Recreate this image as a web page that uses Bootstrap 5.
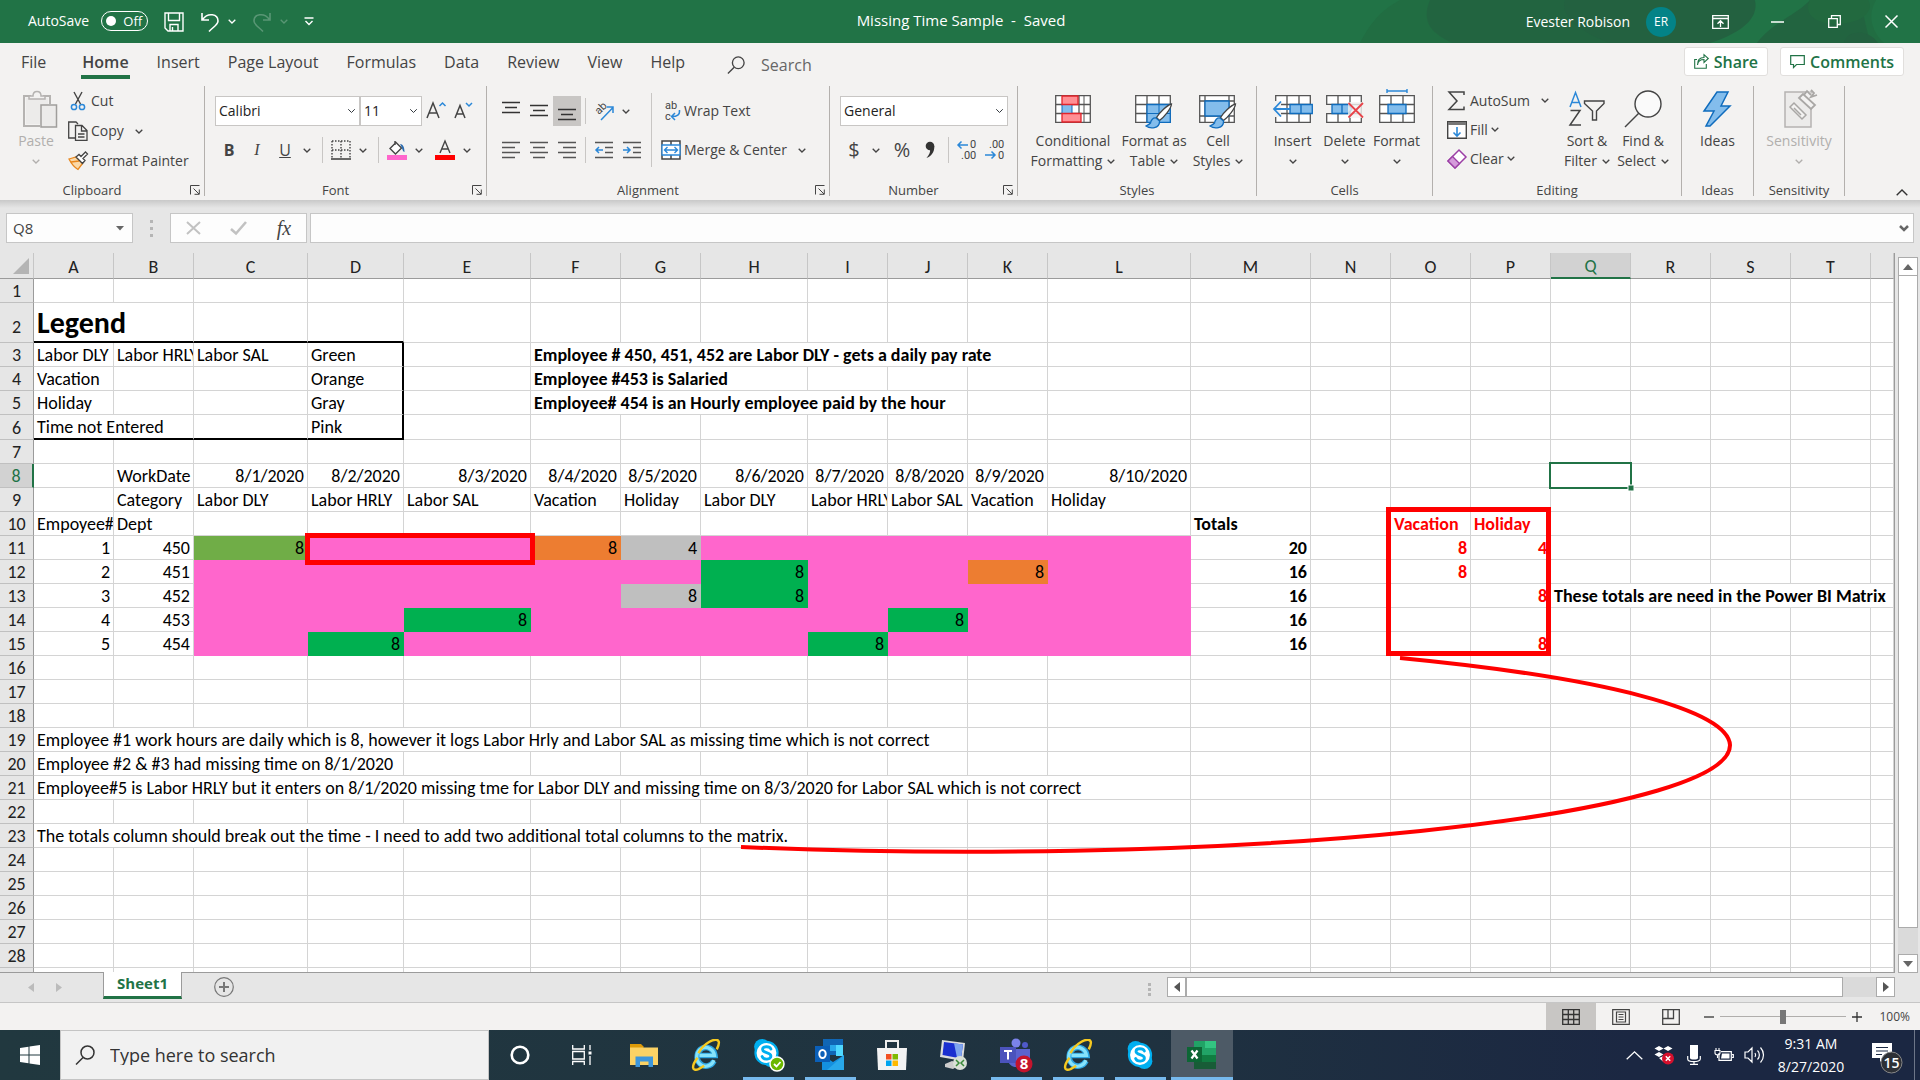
<!DOCTYPE html>
<html lang="en">
<head>
<meta charset="utf-8">
<meta name="viewport" content="width=device-width, initial-scale=1">
<title>Missing Time Sample - Excel</title>
<link rel="stylesheet" href="https://cdn.jsdelivr.net/npm/bootstrap@5.3.0/dist/css/bootstrap.min.css">
<style>
  :root { --xl: #217346; --chrome: #f3f2f1; --ink: #444; --blue: #2b88d8; --line: #d4d4d4; --edge: #9b9b9b; }
  body { font-family: "Open Sans", sans-serif; font-size: 14px; line-height: 20px; color: var(--ink); height: 100vh; overflow: hidden; background: #e6e6e6; }
  body > * { flex-shrink: 0; }
  svg { display: block; flex: none; fill: none; overflow: visible; }
  button, .btn { font-family: inherit; }
  .plain { border: 0; background: none; padding: 0; color: inherit; font-size: 14px; line-height: 20px; display: inline-flex; align-items: center; justify-content: center; }
  .serif { font-family: "Liberation Serif", serif; font-style: italic; }
  .tiny { font-family: Roboto, sans-serif; font-size: 11px; fill: #444; }

  /* title bar */
  .titlebar { height: 43px; background: var(--xl); color: #fff; position: relative; }
  .titlebar .deco { position: absolute; right: 0; top: 0; }
  .titlebar > .zone { position: relative; flex: 1 1 0; }
  .doc { font-size: 15px; padding: 0 0 4px 2px; }
  .lift { padding-bottom: 2px; }
  .autosave { width: 47px; height: 20px; border: 1px solid #fff; border-radius: 10px; background: none; appearance: none; margin: 0; display: block; }
  .autosave::before { content: ""; display: block; width: 10px; height: 10px; border-radius: 5px; background: #fff; margin: 4px 0 0 4px; }
  .autosave-text { position: absolute; right: 6px; top: 0; font-size: 13px; line-height: 20px; }
  .avatar { width: 30px; height: 30px; background: #038387; font-size: 12px; }
  .winbtn { width: 57px; height: 43px; }

  /* tab strip */
  .tabs { height: 43px; background: var(--chrome); padding-left: 7px; }
  .tabs .nav-link { font-size: 16px; line-height: 38px; padding: 0 14px; color: var(--ink); height: 36px; position: relative; }
  .tabs .nav-link.active { font-weight: 600; }
  .tabs .nav-link.active::after { content: ""; position: absolute; left: 13px; right: 13px; bottom: 0; height: 4px; background: var(--xl); }
  .tellme { border: 0; background: none; font-size: 16px; width: 160px; color: #666; padding: 0; outline: 0; }
  .tellme::placeholder, .winsearch::placeholder { color: inherit; opacity: 1; }
  .pill { background: #fff; border: 1px solid #e1dfdd; border-radius: 3px; height: 29px; color: var(--xl); font-weight: 600; font-size: 16px; padding: 0 9px; gap: 5px; }

  /* ribbon */
  .ribbon { height: 114px; background: var(--chrome); }
  .grp { height: 110px; border-right: 1px solid #b3b0ad; }
  .grp-body { height: 98px; }
  .grp-name { font-size: 13px; line-height: 12px; height: 12px; }
  .grp-name span { padding-right: 6px; }
  .grp-name button { width: 10px; margin-right: 4px; }
  .pad-10 { padding-left: 10px; }
  .row-1 { margin-top: 10px; } .row-2 { margin-top: 9px; }
  .ib { width: 28px; height: 30px; }
  .ch { width: 16px; height: 30px; }
  .rule { width: 1px; background: #c8c6c4; margin: 2px 4px; }
  .rule-l { margin-left: 7px; }
  .tall-rule { width: 1px; height: 74px; background: #c8c6c4; margin: 7px 9px 0 5px; }
  .tool { height: 30px; gap: 3px; justify-content: flex-start; white-space: nowrap; }
  .tool > svg:first-child { width: 20px; }
  .edit-tools { width: 126px; padding-left: 14px; }
  .edit-tools .tool { height: 29px; }
  .big { flex-direction: column; justify-content: flex-start; white-space: nowrap; text-align: center; }
  .big > .pic { height: 45px; display: flex; align-items: center; }
  .big > .cap { display: flex; height: 20px; align-items: center; gap: 5px; }
  .w52 { width: 52px; } .w56 { width: 56px; } .w60 { width: 60px; } .w68 { width: 68px; } .w94 { width: 94px; }
  .faded { color: #b1afad; }
  .combo { border: 1px solid #c8c6c4; border-radius: 0; height: 30px; font-size: 14px; line-height: 20px; padding: 0 20px 0 3px; background-color: #fff; background-position: right 3px center; background-size: 9px 8px; color: #222; }
  .combo-font { width: 145px; } .combo-size { width: 62px; } .combo-num { width: 168px; }
  .pressed { background: #c8c6c4; }

  /* formula bar */
  .fbar { background: linear-gradient(#c9c9c9, #e6e6e6 8px); padding: 13px 6px 10px; }
  .box { height: 30px; background: #fdfdfd; border: 1px solid #c6c6c6; }
  .namebox { width: 127px; }
  .namebox input { width: 96px; border: 0; background: none; font-size: 15px; padding: 0 6px; color: var(--ink); outline: 0; }
  .fxbox { width: 137px; margin-right: 3px; }
  .fline { border: 0; background: none; outline: 0; }
  .dots i { display: block; width: 3px; height: 3px; background: #b5b5b5; margin: 2px 0; }
  .fbar .dots { margin: 0 17px; }

  /* sheet */
  .work { flex: 1 1 0; min-height: 0; }
  .sheet { flex: 1 1 0; min-height: 0; overflow: hidden; position: relative; background: #fff; border-right: 1px solid var(--edge); border-bottom: 1px solid var(--edge); }
  .cells { table-layout: fixed; border-collapse: separate; border-spacing: 0; width: 100%; font-family: Carlito, Lato, sans-serif; font-size: 18px; line-height: 22px; color: #000; }
  .cells th { font-weight: 400; text-align: center; background: #e6e6e6; padding: 0; color: #222; }
  .cells thead th { height: 26px; border-right: 1px solid #c6c6c6; border-bottom: 1px solid var(--edge); vertical-align: bottom; line-height: 21px; overflow: hidden; }
  .cells tbody th { border-right: 1px solid var(--edge); border-bottom: 1px solid #c0c0c0; vertical-align: bottom; }
  .cells thead th.here, .cells tbody th.here { background: #d2d2d2; color: var(--xl); }
  .cells thead th.here { border-bottom: 2px solid var(--xl); }
  .cells tbody th.here { border-right: 2px solid var(--xl); }
  .cells tr { height: 24px; }
  .cells tr.tall { height: 40px; }
  .cells tr.tall th { padding-bottom: 4px; }
  .cells tr.ruled { height: 25px; }
  .cells td { border-right: 1px solid var(--line); border-bottom: 1px solid var(--line); padding: 0 3px; white-space: nowrap; overflow: hidden; vertical-align: bottom; }
  .cells td.r { text-align: right; }
  .cells td.b { font-weight: 700; }
  .cells td.title-cell { font-weight: 700; font-size: 30px; line-height: 36px; }
  .cells td.red { color: #f00; }
  .cells td.ul { border-bottom: 2px solid #000; }
  .cells td.ur { border-right: 2px solid #000; }
  .cells td.pink { background: #f6c; border-color: #f6c; }
  .cells td.olive { background: #70ad47; border-color: #70ad47; }
  .cells td.green { background: #00b050; border-color: #00b050; }
  .cells td.orange { background: #ed7d31; border-color: #ed7d31; }
  .cells td.gray { background: #bfbfbf; border-color: #bfbfbf; }
  .ink-layer { position: absolute; left: 0; top: 0; pointer-events: none; }
  .vscroll { width: 25px; padding: 4px 2px 0 3px; }
  .sbtn { background: #fff; border: 1px solid #ababab; padding: 0; display: flex; align-items: center; justify-content: center; }
  .vscroll .sbtn { height: 19px; }
  .vthumb { flex: 1 1 0; background: #fff; border: 1px solid #ababab; border-top: 0; margin-bottom: 26px; }
  .vtrack { flex: 1 1 0; background: #dadada; }

  /* sheet tabs and status */
  .sheetbar { height: 30px; border-bottom: 1px solid #c6c6c6; padding-right: 25px; }
  .prev { margin: 10px 22px 0 28px; } .next { margin: 10px 41px 0 0; }
  .sheet-tab { background: #fff; border: solid #9b9b9b; border-width: 0 1px; border-bottom: 3px solid var(--xl); width: 79px; height: 27px; margin-top: -1px; padding-bottom: 2px; color: var(--xl); font-weight: 700; font-size: 15px; position: relative; }
  .hscroll { width: 728px; height: 20px; margin-top: 4px; background: #dadada; }
  .hscroll .sbtn { width: 19px; }
  .hthumb { flex: 0 0 657px; background: #fff; border: 1px solid #ababab; }
  .status { height: 27px; background: var(--chrome); padding-right: 10px; }
  .viewbtn { width: 50px; height: 27px; }
  .zoomer { appearance: none; width: 126px; height: 22px; background: linear-gradient(#b0aeac, #b0aeac) center / 100% 1px no-repeat; margin: 0 5px 0 2px; }
  .zoomer::-webkit-slider-thumb { appearance: none; width: 6px; height: 14px; background: #777; border-radius: 0; }
  .pct { font-size: 12px; }
  .minus { width: 18px; } .plus { width: 12px; }

  /* taskbar */
  .taskbar { height: 50px; background: linear-gradient(90deg, #21383f, #1f3240 60%, #1b2742 85%); color: #fff; }
  .start { width: 60px; }
  .findbox { width: 429px; background: #f1f1f1; border: 1px solid #c4c4c4; color: #333; padding-left: 14px; gap: 15px; }
  .winsearch { border: 0; background: none; font-size: 18px; outline: 0; padding: 0; color: #333; }
  .app { width: 62px; height: 50px; position: relative; }
  .app.open::after { content: ""; position: absolute; left: 6px; right: 5px; bottom: 0; height: 3px; background: #76b9ed; }
  .app.front { background: #4d5a66; }
  .app.front::after { left: 0; right: 0; }
  .tray { width: 30px; height: 50px; }
  .clock { width: 84px; font-size: 14px; line-height: 23px; text-align: center; padding-top: 2px; }
  .peek { width: 6px; border-left: 1px solid #6d7688; }
  .bell { margin: 6px 11px 0 19px; }
</style>
<script src="https://cdn.jsdelivr.net/npm/bootstrap@5.3.0/dist/js/bootstrap.bundle.min.js"></script>
</head>
<body class="d-flex flex-column">

<svg width="0" height="0" class="position-absolute" aria-hidden="true">
  <symbol id="chev" viewBox="0 0 8 5"><path d="M.7.7 4 4 7.3.7" stroke="currentColor" stroke-width="1.3"/></symbol>
  <symbol id="launch" viewBox="0 0 10 10"><path d="M.5 9.500V.5H9.500M3.500 3.500 9 9M9.300 4.500V9.300H4.500" stroke="#444"/></symbol>
  <symbol id="lens" viewBox="0 0 20 20"><circle cx="12.500" cy="7.500" r="6.500" stroke="currentColor" stroke-width="1.500"/><path d="M8 12.500 1 19.500" stroke="currentColor" stroke-width="1.500"/></symbol>
  <symbol id="grid3" viewBox="0 0 36 28"><path d="M.7.7H35.300V27.300H.7ZM.7 9.500H35.300M.7 18.500H35.300M12 .7V27.300M24 .7V27.300" fill="#fff" stroke="#555" stroke-width="1.300"/></symbol>
  <symbol id="brush" viewBox="0 0 28 26"><path d="M26.500 1C22 2 14 10 11.500 14.500L14.500 17.500C19 14 26 6 26.500 1Z" fill="#fff" stroke="#444" stroke-width="1.300"/><path d="M11 15C8 14.500 6 17 5.500 20 4 22 2 22.500 1 23 5 26 15 26 14.500 18Z" fill="#83bdec" stroke="#0f6cbd" stroke-width="1.300"/></symbol>
  <symbol id="skype" viewBox="0 0 30 34"><circle cx="10" cy="10" r="9" fill="#00aff0"/><circle cx="20" cy="24" r="9" fill="#00aff0"/><circle cx="15" cy="17" r="12.500" fill="#fff" stroke="#00aff0" stroke-width="2.500"/><path d="M20 12.500C18.500 9 10.500 9 10.500 13 10.500 17.500 20 15.500 20 20.500 20 25 11.500 25 10 21" stroke="#00aff0" stroke-width="3.200" stroke-linecap="round"/></symbol>
  <symbol id="ie" viewBox="0 0 32 34"><path d="M24.500 23.500A9.500 10 0 1 1 25.500 17.500H8.500" stroke="#2da5e0" stroke-width="6"/><path d="M24.500 22.500A9.500 10 0 1 1 25 17.500H9" stroke="#86e3fb" stroke-width="3.500"/><path d="M8 15C13 5 27-3 29.500 2.500 30.500 5 29 8 27.500 11M7 20C0 29 1 35 8 32 10 31 12 30 14 28.500" stroke="#f6c920" stroke-width="2.600"/></symbol>
</svg>

<header class="titlebar d-flex align-items-center">
  <svg class="deco" width="560" height="43" viewBox="0 0 560 43"><path d="M0 43C12 20 22 10 40 0H560V43Z" fill="#22693f" opacity=".6"/><path d="M70 0C60 24 74 34 92 43H510L500 0Z" fill="#236140" opacity=".7"/><path d="M205 0C200 14 215 30 250 43H380C402 30 400 14 394 0Z" fill="#236140"/><path d="M395 0H450C438 14 410 24 397 43H350C390 30 398 14 395 0Z" fill="#217346"/><path d="M450 0C440 20 470 30 498 20 510 14 512 6 508 0Z" fill="#22693f"/><path d="M484 43C486 30 508 28 518 43Z" fill="#236140"/><path d="M516 0H560V43H524C510 30 508 14 516 0Z" fill="#217346"/></svg>
  <div class="zone d-flex align-items-center">
    <label for="autosave" class="ms-4 ps-1 me-2 lift">AutoSave</label>
    <div class="position-relative ms-1 lift"><input type="checkbox" class="autosave" id="autosave"><span class="autosave-text">Off</span></div>
    <button class="plain ms-3 me-3" aria-label="Save"><svg width="20" height="20" viewBox="0 0 20 20"><path d="M1 1H19V19H4L1 16ZM4.500 1V8.500H15.500V1M6 19V12.500H14V19M8.500 19V15" stroke="#fff" stroke-width="1.400"/></svg></button>
    <button class="plain gap-2" aria-label="Undo"><svg width="20" height="20" viewBox="0 0 20 20"><path d="M2 1V8H9M2.500 7.500C8 0 18 2 18 9 18 13 13 15 9 19.500" stroke="#fff" stroke-width="1.600"/></svg><svg width="8" height="5"><use href="#chev"/></svg></button>
    <button class="plain gap-2 ms-3 opacity-25" aria-label="Redo"><svg width="20" height="20" viewBox="0 0 20 20"><path d="M18 1V8H11M17.500 7.500C12 0 2 2 2 9 2 13 7 15 11 19.500" stroke="#fff" stroke-width="1.600"/></svg><svg width="8" height="5"><use href="#chev"/></svg></button>
    <button class="plain ms-3" aria-label="Customize Quick Access Toolbar"><svg width="10" height="9" viewBox="0 0 10 9"><path d="M.5 1H9.500M1.500 4 5 7.500 8.500 4" stroke="#fff" stroke-width="1.400"/></svg></button>
  </div>
  <div class="position-relative doc">Missing Time Sample &nbsp;-&nbsp; Saved</div>
  <div class="zone d-flex align-items-center justify-content-end">
    <span>Evester Robison</span>
    <span class="avatar rounded-circle d-flex align-items-center justify-content-center ms-3 me-3">ER</span>
    <button class="plain winbtn" aria-label="Ribbon Display Options"><svg width="17" height="14" viewBox="0 0 17 14"><path d="M.7.7H16.300V13.300H.7ZM.7 3.500H16.300M8.500 12V6M5.500 8.700 8.500 5.700 11.500 8.700" stroke="#fff" stroke-width="1.300"/></svg></button>
    <button class="plain winbtn" aria-label="Minimize"><svg width="13" height="2"><path d="M0 1H13" stroke="#fff" stroke-width="1.500"/></svg></button>
    <button class="plain winbtn" aria-label="Restore"><svg width="13" height="13" viewBox="0 0 13 13"><path d="M.7 3.700H9.300V12.300H.7ZM3.500 3.500V.7H12.300V9.500H9.500" stroke="#fff" stroke-width="1.300"/></svg></button>
    <button class="plain winbtn" aria-label="Close"><svg width="13" height="13" viewBox="0 0 13 13"><path d="M.5.5 12.500 12.500M12.500.5.5 12.500" stroke="#fff" stroke-width="1.500"/></svg></button>
  </div>
</header>

<div class="tabs d-flex align-items-start">
  <nav class="nav flex-nowrap">
    <a class="nav-link me-2" href="#">File</a><a class="nav-link active" href="#">Home</a><a class="nav-link" href="#">Insert</a><a class="nav-link" href="#">Page Layout</a><a class="nav-link" href="#">Formulas</a><a class="nav-link" href="#">Data</a><a class="nav-link" href="#">Review</a><a class="nav-link" href="#">View</a><a class="nav-link" href="#">Help</a>
  </nav>
  <label class="d-flex align-items-center ms-4 ps-1 mt-2 pt-1 gap-3"><svg width="18" height="18"><use href="#lens"/></svg><input class="tellme" type="text" placeholder="Search" aria-label="Search"></label>
  <div class="ms-auto d-flex me-3 mt-1">
    <button class="plain pill me-2"><svg width="15" height="15" viewBox="0 0 15 15"><path d="M3 5.500H.7V14.300H12.300V10M3.500 11C4 7 6 5.500 10 5.500V8.500L14.300 4.500 10 .7V3.500C5.500 3.500 3.500 6 3.500 11Z" stroke="#217346" stroke-width="1.100"/></svg>Share</button>
    <button class="plain pill ms-1"><svg width="15" height="14" viewBox="0 0 15 14"><path d="M.7.7H14.300V9.500H6.500L3.500 12.500V9.500H.7Z" stroke="#217346" stroke-width="1.200"/></svg>Comments</button>
  </div>
</div>

<section class="ribbon d-flex" aria-label="Home ribbon">
  <div class="grp d-flex flex-column" style="width:205px">
    <div class="grp-body d-flex">
      <button class="plain big faded ms-2 me-1 w56"><span class="pic ps-2"><svg width="34" height="38" viewBox="0 0 34 38"><path d="M8 6H1V36H17M20 6H27V14" stroke="#b5b3b1" stroke-width="2"/><path d="M3 8H25V34H3Z" fill="#ecebea"/><path d="M6 9V6H10C10 0 18 0 18 6H22V9Z" fill="#f3f2f1" stroke="#b5b3b1" stroke-width="1.500"/><path d="M18 15H33.500V37H18Z" fill="#ecebea" stroke="#a09e9c" stroke-width="1.500"/></svg></span><span class="cap">Paste</span><span class="cap"><svg width="8" height="5"><use href="#chev"/></svg></span></button>
      <div class="d-flex flex-column align-items-start">
        <button class="plain tool"><svg width="20" height="20" viewBox="0 0 20 20"><path d="M6 1 12.500 13M14 1 7.500 13" stroke="#444" stroke-width="1.400"/><circle cx="6" cy="16" r="2.600" stroke="#2b88d8" stroke-width="1.500"/><circle cx="14" cy="16" r="2.600" stroke="#2b88d8" stroke-width="1.500"/></svg>Cut</button>
        <button class="plain tool"><svg width="20" height="20" viewBox="0 0 20 20"><path d="M7 17H.7V1H8L10 3M7.500 4.500H14L19 9.500V19.300H7.500ZM13.500 5V10H19M10 13H16.500M10 16H16.500" stroke="#444" stroke-width="1.300"/></svg>Copy<svg class="ms-2" width="8" height="5"><use href="#chev"/></svg></button>
        <button class="plain tool"><svg width="20" height="20" viewBox="0 0 20 20"><path d="M1 8 8 6 14.500 12.500 10 18.500C6 16 3 12 1 8ZM3 11 11 10" stroke="#e8861c" fill="#fbd9a8" stroke-width="1.300"/><path d="M8 6 11 3.500 13 5.500 17.500 1 19.500 3 15 7.500 17 9.500 14.500 12.500Z" stroke="#444" fill="#fff" stroke-width="1.300"/></svg>Format Painter</button>
      </div>
    </div>
    <div class="grp-name d-flex"><span class="flex-grow-1 text-center">Clipboard</span><button class="plain" aria-label="Clipboard settings"><svg width="10" height="10"><use href="#launch"/></svg></button></div>
  </div>

  <div class="grp d-flex flex-column" style="width:282px">
    <div class="grp-body d-flex flex-column pad-10">
      <div class="d-flex row-1">
        <select class="form-select combo combo-font" aria-label="Font"><option>Calibri</option></select>
        <select class="form-select combo combo-size" aria-label="Font size"><option>11</option></select>
        <button class="plain ib" aria-label="Increase font size"><svg width="20" height="18" viewBox="0 0 20 18"><path d="M1 16 7 1 13 16M3 11H11" stroke="#444" stroke-width="1.500"/><path d="M13.500 4 16.500 1 19.500 4" stroke="#2b88d8" stroke-width="1.500"/></svg></button>
        <button class="plain ib" aria-label="Decrease font size"><svg width="20" height="18" viewBox="0 0 20 18"><path d="M1 16 6 3.500 11 16M3 12H9" stroke="#444" stroke-width="1.500"/><path d="M12 1 15 4 18 1" stroke="#2b88d8" stroke-width="1.500"/></svg></button>
      </div>
      <div class="d-flex row-2">
        <button class="plain ib fw-bold fs-6">B</button><button class="plain ib fs-6 serif">I</button><button class="plain ib fs-6 text-decoration-underline">U</button><button class="plain ch" aria-label="Underline style"><svg width="8" height="5"><use href="#chev"/></svg></button>
        <span class="rule rule-l"></span>
        <button class="plain ib" aria-label="Borders"><svg width="20" height="20" viewBox="0 0 20 20"><path d="M1 1H19M1 10H19M1 1V18M10 1V18M19 1V18" stroke="#444" stroke-width="1.400" stroke-dasharray="1.500 1.500"/><path d="M0 19H20" stroke="#444" stroke-width="1.600"/></svg></button><button class="plain ch" aria-label="Border style"><svg width="8" height="5"><use href="#chev"/></svg></button>
        <span class="rule rule-l"></span>
        <button class="plain ib" aria-label="Fill color"><svg width="20" height="20" viewBox="0 0 20 20"><path d="M3 8.500 9 2.500 14.500 8 8.500 14ZM8 5V1" stroke="#444" stroke-width="1.400" fill="#fff"/><path d="M13 4C16 4 17.500 7 17.500 12 15.500 12 15.500 8 13 4Z" fill="#2b6cb0"/><path d="M0 15H20V20H0Z" fill="#f6c"/></svg></button><button class="plain ch" aria-label="Fill color list"><svg width="8" height="5"><use href="#chev"/></svg></button>
        <button class="plain ib ms-1" aria-label="Font color"><svg width="20" height="20" viewBox="0 0 20 20"><path d="M5 13 10 1 15 13M7 9H13" stroke="#444" stroke-width="1.400"/><path d="M0 15H20V20H0Z" fill="red"/></svg></button><button class="plain ch" aria-label="Font color list"><svg width="8" height="5"><use href="#chev"/></svg></button>
      </div>
    </div>
    <div class="grp-name d-flex"><span class="flex-grow-1 text-center">Font</span><button class="plain" aria-label="Font settings"><svg width="10" height="10"><use href="#launch"/></svg></button></div>
  </div>

  <div class="grp d-flex flex-column" style="width:343px">
    <div class="grp-body d-flex pad-10">
      <div>
        <div class="d-flex row-1">
          <button class="plain ib" aria-label="Top align"><svg width="18" height="20" viewBox="0 0 18 20"><path d="M0 1.500H18M3 6.500H15M0 11.500H18" stroke="#333" stroke-width="1.400"/></svg></button>
          <button class="plain ib" aria-label="Middle align"><svg width="18" height="20" viewBox="0 0 18 20"><path d="M0 4.500H18M3 9.500H15M0 14.500H18" stroke="#333" stroke-width="1.400"/></svg></button>
          <button class="plain ib pressed" aria-label="Bottom align"><svg width="18" height="20" viewBox="0 0 18 20"><path d="M0 8.500H18M3 13.500H15M0 18.500H18" stroke="#333" stroke-width="1.400"/></svg></button>
          <span class="rule"></span>
          <button class="plain ib" aria-label="Orientation"><svg width="20" height="20" viewBox="0 0 20 20"><text class="tiny" transform="translate(5 14) rotate(-45)">ab</text><path d="M7 19 19 6.500M13 6H19V12" stroke="#2b88d8" stroke-width="1.500"/></svg></button><button class="plain ch" aria-label="Orientation list"><svg width="8" height="5"><use href="#chev"/></svg></button>
        </div>
        <div class="d-flex row-2">
          <button class="plain ib" aria-label="Align left"><svg width="18" height="18" viewBox="0 0 18 18"><path d="M0 1.500H18M0 6.500H13M0 11.500H18M0 16.500H13" stroke="#555" stroke-width="1.400"/></svg></button>
          <button class="plain ib" aria-label="Center"><svg width="18" height="18" viewBox="0 0 18 18"><path d="M0 1.500H18M3 6.500H15M0 11.500H18M3 16.500H15" stroke="#555" stroke-width="1.400"/></svg></button>
          <button class="plain ib" aria-label="Align right"><svg width="18" height="18" viewBox="0 0 18 18"><path d="M0 1.500H18M5 6.500H18M0 11.500H18M5 16.500H18" stroke="#555" stroke-width="1.400"/></svg></button>
          <span class="rule"></span>
          <button class="plain ib" aria-label="Decrease indent"><svg width="18" height="18" viewBox="0 0 18 18"><path d="M0 1.500H18M10 6.500H18M10 11.500H18M0 16.500H18" stroke="#555" stroke-width="1.400"/><path d="M8 9H1M4 6 1 9 4 12" stroke="#2b88d8" stroke-width="1.500"/></svg></button>
          <button class="plain ib" aria-label="Increase indent"><svg width="18" height="18" viewBox="0 0 18 18"><path d="M0 1.500H18M10 6.500H18M10 11.500H18M0 16.500H18" stroke="#555" stroke-width="1.400"/><path d="M0 9H7M4 6 7 9 4 12" stroke="#2b88d8" stroke-width="1.500"/></svg></button>
        </div>
      </div>
      <span class="tall-rule"></span>
      <div class="d-flex flex-column align-items-start">
        <button class="plain tool row-1"><svg width="20" height="22" viewBox="0 0 20 22"><text class="tiny" x="4" y="9">ab</text><text class="tiny" x="4" y="20">c</text><path d="M18.500 10C19 15 16 16.500 11 16.500M14 13 10.500 16.500 14 20" stroke="#2b88d8" stroke-width="1.500"/></svg>Wrap Text</button>
        <button class="plain tool row-2"><svg width="20" height="20" viewBox="0 0 20 20"><path d="M1 1H19V19H1ZM10 1V5M10 15V19" stroke="#444" stroke-width="1.500" fill="#fff"/><path d="M1 5H19V15H1Z" stroke="#2b88d8" stroke-width="1.300" fill="#fff"/><path d="M3.500 10H16.500M6.500 7 3.500 10 6.500 13M13.500 7 16.500 10 13.500 13" stroke="#2b88d8" stroke-width="1.400"/></svg>Merge &amp; Center<svg class="ms-2" width="8" height="5"><use href="#chev"/></svg></button>
      </div>
    </div>
    <div class="grp-name d-flex"><span class="flex-grow-1 text-center">Alignment</span><button class="plain" aria-label="Alignment settings"><svg width="10" height="10"><use href="#launch"/></svg></button></div>
  </div>

  <div class="grp d-flex flex-column" style="width:188px">
    <div class="grp-body d-flex flex-column pad-10">
      <div class="d-flex row-1"><select class="form-select combo combo-num" aria-label="Number format"><option>General</option></select></div>
      <div class="d-flex row-2">
        <button class="plain ib fs-5">$</button><button class="plain ch me-1" aria-label="Accounting formats"><svg width="8" height="5"><use href="#chev"/></svg></button><button class="plain ib fs-5">%</button><button class="plain ib" aria-label="Comma style"><svg width="10" height="18" viewBox="0 0 10 18"><circle cx="5" cy="5" r="4.300" fill="#333"/><path d="M9.300 5C9.500 11 6.500 15 1.500 17 4.500 13.500 5.500 11 5 8Z" fill="#333"/></svg></button>
        <span class="rule"></span>
        <button class="plain ib" aria-label="Increase decimal"><svg width="20" height="22" viewBox="0 0 20 22"><text class="tiny" x="13" y="9">0</text><text class="tiny" x="4" y="20">.00</text><path d="M11 6H1M4.500 2.500 1 6 4.500 9.500" stroke="#2b88d8" stroke-width="1.500"/></svg></button>
        <button class="plain ib" aria-label="Decrease decimal"><svg width="20" height="22" viewBox="0 0 20 22"><text class="tiny" x="4" y="9">.00</text><text class="tiny" x="13" y="20">0</text><path d="M0 16H10M6.500 12.500 10 16 6.500 19.500" stroke="#2b88d8" stroke-width="1.500"/></svg></button>
      </div>
    </div>
    <div class="grp-name d-flex"><span class="flex-grow-1 text-center">Number</span><button class="plain" aria-label="Number settings"><svg width="10" height="10"><use href="#launch"/></svg></button></div>
  </div>

  <div class="grp d-flex flex-column" style="width:239px">
    <div class="grp-body d-flex justify-content-center">
      <button class="plain big w94"><span class="pic"><svg width="36" height="28" viewBox="0 0 36 28"><use href="#grid3" width="36" height="28"/><path d="M29 .7V27.300" stroke="#555"/><path d="M7 9.500H17V18.500H7Z" fill="#83bdec" stroke="#0f6cbd"/><path d="M7 1H23V9.500H7ZM7 18.500H26V27H7Z" fill="#ff8f94" stroke="#e3242b" stroke-width="1.300"/></svg></span><span class="cap">Conditional</span><span class="cap">Formatting <svg width="8" height="5"><use href="#chev"/></svg></span></button>
      <button class="plain big w68"><span class="pic"><svg width="38" height="36" viewBox="0 0 38 36"><g transform="translate(0 4)"><use href="#grid3" width="36" height="28"/><path d="M12 9.500H35.300V27.300H12Z" fill="#83bdec" stroke="#0f6cbd" stroke-width="1.300"/><path d="M24 9.500V27M12 18.500H35" stroke="#0f6cbd"/></g><use href="#brush" x="10" y="12" width="28" height="26"/></svg></span><span class="cap">Format as</span><span class="cap">Table <svg width="8" height="5"><use href="#chev"/></svg></span></button>
      <button class="plain big w60"><span class="pic"><svg width="38" height="36" viewBox="0 0 38 36"><path d="M.7 4.700H35.300V31.300H.7ZM6 4.700V31.300M30 4.700V31.300M.7 10H35.300M.7 25H35.300" fill="#fff" stroke="#555" stroke-width="1.300"/><path d="M6 10H30V25H6Z" fill="#83bdec" stroke="#0f6cbd" stroke-width="1.300"/><use href="#brush" x="10" y="12" width="28" height="26"/></svg></span><span class="cap">Cell</span><span class="cap">Styles <svg width="8" height="5"><use href="#chev"/></svg></span></button>
    </div>
    <div class="grp-name text-center">Styles</div>
  </div>

  <div class="grp d-flex flex-column" style="width:176px">
    <div class="grp-body d-flex justify-content-center">
      <button class="plain big w52"><span class="pic"><svg width="40" height="28" viewBox="0 0 40 28"><use href="#grid3" x="2" width="36" height="28"/><path d="M0 6H8V22H0Z" fill="#f3f2f1"/><path d="M17 9.500H39.300V18.500H17ZM28 9.500V18.500" fill="#83bdec" stroke="#0f6cbd" stroke-width="1.300"/><path d="M18 14H1M8 6.500 1 14 8 21.500" stroke="#2b88d8" stroke-width="1.800"/></svg></span><span class="cap">Insert</span><span class="cap"><svg width="8" height="5"><use href="#chev"/></svg></span></button>
      <button class="plain big w52"><span class="pic"><svg width="38" height="28" viewBox="0 0 38 28"><use href="#grid3" width="36" height="28"/><path d="M0 10H6V18H0Z" fill="#f3f2f1"/><path d="M6 9.500H22L26 14 22 18.500H6ZM16 9.500V18.500" fill="#83bdec" stroke="#0f6cbd" stroke-width="1.300"/><path d="M22 7H38V23H22Z" fill="#f3f2f1" opacity=".8"/><path d="M22.500 8 37 22.500M37 8 22.500 22.500" stroke="#e8444a" stroke-width="1.800"/></svg></span><span class="cap">Delete</span><span class="cap"><svg width="8" height="5"><use href="#chev"/></svg></span></button>
      <button class="plain big w52"><span class="pic"><svg width="36" height="40" viewBox="0 0 36 40"><path d="M8 2H28M8 0V4M28 0V4" stroke="#2b88d8" stroke-width="1.400"/><use href="#grid3" y="6" width="36" height="28"/><path d="M9 15.500H27V24.500H9Z" fill="#83bdec" stroke="#0f6cbd" stroke-width="1.300"/></svg></span><span class="cap">Format</span><span class="cap"><svg width="8" height="5"><use href="#chev"/></svg></span></button>
    </div>
    <div class="grp-name text-center">Cells</div>
  </div>

  <div class="grp d-flex flex-column" style="width:249px">
    <div class="grp-body d-flex">
      <div class="edit-tools d-flex flex-column align-items-start">
        <button class="plain tool"><svg width="20" height="20" viewBox="0 0 20 20"><path d="M17 4V1H2L10 10 2 18.500H17V15.500" stroke="#444" stroke-width="1.500"/></svg>AutoSum<svg class="ms-2" width="8" height="5"><use href="#chev"/></svg></button>
        <button class="plain tool"><svg width="20" height="18" viewBox="0 0 20 18"><path d="M.7.7H19.300V17.300H.7Z" fill="#fff" stroke="#444" stroke-width="1.400"/><path d="M1 1H19V4H1Z" fill="#777"/><path d="M10 6V15M6.500 11.500 10 15 13.500 11.500" stroke="#2b88d8" stroke-width="1.600"/></svg>Fill<svg width="8" height="5"><use href="#chev"/></svg></button>
        <button class="plain tool"><svg width="20" height="20" viewBox="0 0 20 20"><path d="M1 12 12 1 19 8 8 19Z" fill="#fff" stroke="#9b3fa5" stroke-width="1.500"/><path d="M1 12 5.500 7.500 12.500 14.500 8 19Z" fill="#d59bdb" stroke="#9b3fa5" stroke-width="1.300"/></svg>Clear<svg width="8" height="5"><use href="#chev"/></svg></button>
      </div>
      <button class="plain big w56"><span class="pic"><svg width="36" height="36" viewBox="0 0 36 36"><path d="M1 16 6.500 1.500 12 16M3 11.500H10" stroke="#2b88d8" stroke-width="1.500"/><path d="M1.500 19.500H11L1 34H12" stroke="#444" stroke-width="1.500"/><path d="M15.500 10H35V12.500L27.500 20V29H23.500V20L15.500 12.500Z" stroke="#444" stroke-width="1.400"/></svg></span><span class="cap">Sort &amp;</span><span class="cap">Filter <svg width="8" height="5"><use href="#chev"/></svg></span></button>
      <button class="plain big w56"><span class="pic"><svg width="38" height="38" viewBox="0 0 38 38"><circle cx="24" cy="14" r="13" fill="#fafafa" stroke="#444" stroke-width="1.400"/><path d="M15 23 1 37" stroke="#444" stroke-width="1.400"/></svg></span><span class="cap">Find &amp;</span><span class="cap">Select <svg width="8" height="5"><use href="#chev"/></svg></span></button>
    </div>
    <div class="grp-name text-center">Editing</div>
  </div>

  <div class="grp d-flex flex-column" style="width:72px">
    <div class="grp-body d-flex justify-content-center">
      <button class="plain big"><span class="pic"><svg width="28" height="36" viewBox="0 0 28 36"><path d="M14 1H25L18 15H27L7 35H3L11 20H1Z" fill="#83bdec" stroke="#0f6cbd" stroke-width="1.500"/></svg></span><span class="cap">Ideas</span></button>
    </div>
    <div class="grp-name text-center">Ideas</div>
  </div>

  <div class="grp d-flex flex-column" style="width:91px">
    <div class="grp-body d-flex justify-content-center">
      <button class="plain big faded"><span class="pic ps-1"><svg width="34" height="38" viewBox="0 0 34 38"><path d="M1 2H27V37H1Z" fill="#ecebea" stroke="#b5b3b1" stroke-width="1.500"/><path d="M17 9 25 1 34 10 26 18Z" fill="#f3f2f1"/><path d="M6 17 10 13 22 25 18 29ZM10 18 17 25" fill="#f3f2f1" stroke="#a9a7a5" stroke-width="1.500"/><path d="M15 8 19 4 31 15 27 19ZM20 5 23 1 27 5M27 0 30 3 27 7 33 5" fill="#f3f2f1" stroke="#a9a7a5" stroke-width="1.800"/></svg></span><span class="cap">Sensitivity</span><span class="cap"><svg width="8" height="5"><use href="#chev"/></svg></span></button>
    </div>
    <div class="grp-name text-center">Sensitivity</div>
  </div>
  <button class="plain ms-auto me-2 mt-auto mb-1 pe-1" aria-label="Collapse the ribbon"><svg width="12" height="7" viewBox="0 0 12 7"><path d="M.7 6.300 6 1 11.300 6.300" stroke="#333" stroke-width="1.400"/></svg></button>
</section>

<div class="fbar d-flex">
  <div class="box namebox d-flex align-items-center justify-content-between"><input type="text" value="Q8" aria-label="Name box"><svg class="me-2" width="8" height="5" viewBox="0 0 8 5"><path d="M0 0H8L4 4.500Z" fill="#666"/></svg></div>
  <div class="dots d-flex flex-column justify-content-center"><i></i><i></i><i></i></div>
  <div class="box fxbox d-flex align-items-center justify-content-around">
    <button class="plain" aria-label="Cancel"><svg width="15" height="14" viewBox="0 0 15 14"><path d="M1 1 14 13M14 1 1 13" stroke="#c2c2c2" stroke-width="2"/></svg></button>
    <button class="plain" aria-label="Enter"><svg width="17" height="14" viewBox="0 0 17 14"><path d="M1 8 6 12.500 16 1" stroke="#c2c2c2" stroke-width="2.600"/></svg></button>
    <button class="plain serif fs-5">fx</button>
  </div>
  <div class="box flex-grow-1 d-flex align-items-center pe-1"><input class="fline flex-grow-1" type="text" aria-label="Formula bar"><svg width="10" height="7" viewBox="0 0 10 7"><path d="M1 1 5 5 9 1" stroke="#666" stroke-width="2.500"/></svg></div>
</div>

<main class="work d-flex">
  <div class="sheet">
    <table class="cells">
      <colgroup id="cols"></colgroup>
      <thead><tr id="letters"></tr></thead>
      <tbody id="rows"></tbody>
    </table>
    <svg class="ink-layer" width="1895" height="700" viewBox="0 0 1895 700">
      <rect x="307.500" y="282.500" width="225" height="27" stroke="red" stroke-width="5"/>
      <rect x="1388.500" y="256.500" width="160" height="144" stroke="red" stroke-width="5"/>
      <path d="M1400 405A763 106.500 0 0 1 1730 492A763 106.500 0 0 1 741 594" stroke="red" stroke-width="4"/>
      <rect x="1550" y="210" width="81" height="25" stroke="#217346" stroke-width="2"/>
      <rect x="1628" y="232" width="6" height="6" fill="#217346" stroke="#fff"/>
    </svg>
  </div>
  <div class="vscroll d-flex flex-column" aria-hidden="true">
    <div class="sbtn"><svg width="10" height="6" viewBox="0 0 10 6"><path d="M0 6 5 0 10 6Z" fill="#666"/></svg></div>
    <div class="vtrack d-flex flex-column"><div class="vthumb"></div></div>
    <div class="sbtn"><svg width="10" height="6" viewBox="0 0 10 6"><path d="M0 0H10L5 6Z" fill="#666"/></svg></div>
  </div>
</main>

<div class="sheetbar d-flex align-items-start">
  <button class="plain prev" aria-label="Previous sheet"><svg width="6" height="9" viewBox="0 0 6 9"><path d="M6 0V9L0 4.500Z" fill="#bbb"/></svg></button>
  <button class="plain next" aria-label="Next sheet"><svg width="6" height="9" viewBox="0 0 6 9"><path d="M0 0V9L6 4.500Z" fill="#bbb"/></svg></button>
  <button class="plain sheet-tab">Sheet1</button>
  <button class="plain mt-1 ms-4 ps-2" aria-label="New sheet"><svg width="20" height="20" viewBox="0 0 20 20"><circle cx="10" cy="10" r="9.300" stroke="#777" stroke-width="1.200"/><path d="M10 5V15M5 10H15" stroke="#777" stroke-width="2"/></svg></button>
  <div class="dots ms-auto me-3 mt-2"><i></i><i></i><i></i></div>
  <div class="hscroll d-flex" aria-hidden="true">
    <div class="sbtn"><svg width="6" height="10" viewBox="0 0 6 10"><path d="M6 0V10L0 5Z" fill="#555"/></svg></div>
    <div class="hthumb"></div>
    <div class="sbtn ms-auto"><svg width="6" height="10" viewBox="0 0 6 10"><path d="M0 0V10L6 5Z" fill="#555"/></svg></div>
  </div>
</div>

<div class="status d-flex align-items-center justify-content-end">
  <button class="plain viewbtn pressed" aria-label="Normal view"><svg width="18" height="16" viewBox="0 0 18 16"><path d="M.7.7H17.300V15.300H.7ZM.7 5.500H17.300M.7 10.500H17.300M6.300.7V15.300M11.700.7V15.300" stroke="#333" stroke-width="1.300"/></svg></button>
  <button class="plain viewbtn" aria-label="Page layout view"><svg width="18" height="16" viewBox="0 0 18 16"><path d="M.7.7H17.300V15.300H.7ZM4.500 3H13.500V13H4.500ZM6.500 5.500H11.500M6.500 8H11.500M6.500 10.500H11.500" stroke="#444" stroke-width="1.200"/></svg></button>
  <button class="plain viewbtn" aria-label="Page break view"><svg width="18" height="16" viewBox="0 0 18 16"><path d="M.7.7H17.300V15.300H.7ZM.7 9.500H11.500V.7M6 .7V9.500" stroke="#444" stroke-width="1.300"/></svg></button>
  <button class="plain ms-1 minus" aria-label="Zoom out"><svg width="10" height="10"><path d="M0 5H10" stroke="#333" stroke-width="1.300"/></svg></button>
  <input class="zoomer" type="range" min="0" max="100" value="50" aria-label="Zoom">
  <button class="plain plus" aria-label="Zoom in"><svg width="10" height="10"><path d="M0 5H10M5 0V10" stroke="#333" stroke-width="1.300"/></svg></button>
  <button class="plain ms-3 pct">100%</button>
</div>

<footer class="taskbar d-flex">
  <button class="plain start" aria-label="Start"><svg width="20" height="20" viewBox="0 0 20 20"><path d="M0 3 8.500 1.700V9.500H0ZM9.500 1.500 20 0V9.500H9.500ZM0 10.500H8.500V18.300L0 17ZM9.500 10.500H20V20L9.500 18.500Z" fill="#fff"/></svg></button>
  <label class="findbox d-flex align-items-center"><svg width="20" height="20"><use href="#lens"/></svg><input class="winsearch flex-grow-1" type="text" placeholder="Type here to search" aria-label="Type here to search"></label>
  <button class="plain app" aria-label="Cortana"><svg width="20" height="20"><circle cx="10" cy="10" r="8.300" stroke="#fff" stroke-width="2.600"/></svg></button>
  <button class="plain app" aria-label="Task view"><svg width="20" height="20" viewBox="0 0 20 20"><path d="M.7 0V4H12.300V0M.7 6.500H12.300V14H.7ZM.7 20V16.500H12.300V20M18 0V5M18 11V20" stroke="#fff" stroke-width="1.300"/><path d="M16.500 6.500H19.500V9.500H16.500Z" fill="#fff"/></svg></button>
  <button class="plain app" aria-label="File Explorer"><svg width="28" height="24" viewBox="0 0 28 24"><path d="M0 1H11L13.500 3.500V8H0Z" fill="#dd9a08"/><path d="M0 4.500H28V22H0Z" fill="#fbd265"/><path d="M5.500 24V13.500H23V24H18.500V18.500H10V24Z" fill="#3c96dc"/></svg></button>
  <button class="plain app" aria-label="Internet Explorer"><svg width="30" height="32"><use href="#ie"/></svg></button>
  <button class="plain app open" aria-label="Skype for Business"><svg width="30" height="34" viewBox="0 0 30 34"><use href="#skype" x="0" y="0" width="27" height="30"/><circle cx="24" cy="26" r="7" fill="#6bb700" stroke="#fff" stroke-width="1.500"/><path d="M21 26 23.500 28.500 27.500 24" stroke="#fff" stroke-width="1.800"/></svg></button>
  <button class="plain app open" aria-label="Outlook"><svg width="30" height="32" viewBox="0 0 30 32"><path d="M8 0H28V16H8Z" fill="#1066b5"/><path d="M15 6H28V12H15Z" fill="#28a8ea"/><path d="M21 6H28V17H21Z" fill="#50d9ff"/><path d="M7 16 18 23 29 16V31H7Z" fill="#1490df"/><path d="M29 16 12 31H29Z" fill="#28a8ea"/><path d="M0 7H15V23H0Z" fill="#0a5fb8"/><ellipse cx="7.500" cy="15" rx="3.200" ry="4" stroke="#fff" stroke-width="2"/></svg></button>
  <button class="plain app" aria-label="Microsoft Store"><svg width="30" height="32" viewBox="0 0 30 32"><path d="M9 10V2H21V10" stroke="#eee" stroke-width="2"/><path d="M0 9H30L29 31H1Z" fill="#f3f3f3"/><path d="M9 15H14.500V20.500H9Z" fill="#f25022"/><path d="M15.500 15H21V20.500H15.500Z" fill="#7fba00"/><path d="M9 21.500H14.500V27H9Z" fill="#00a4ef"/><path d="M15.500 21.500H21V27H15.500Z" fill="#ffb900"/></svg></button>
  <button class="plain app" aria-label="Remote Desktop"><svg width="30" height="30" viewBox="0 0 30 30"><path d="M3 0 26 3 24 21 1 17Z" fill="#ddd"/><path d="M5 2 24 4.500 22 18.500 3.500 15Z" fill="#1b2fd0"/><path d="M15 3.200 24 4.500 22 18.500 18 17.700Z" fill="#7fa5ee"/><path d="M6 24 13 21 22 24 14 29 6 27Z" fill="#ccc"/><circle cx="21" cy="23" r="7" fill="#d9e0d6"/><path d="M17 20 20 23 17 26M25 20 22 23 25 26" stroke="#3a8a3a" stroke-width="1.500"/></svg></button>
  <button class="plain app open" aria-label="Microsoft Teams"><svg width="34" height="34" viewBox="0 0 34 34"><circle cx="17" cy="5" r="4.500" fill="#7b83eb"/><circle cx="26" cy="7" r="3" fill="#5059c9"/><path d="M9 11H31V22C31 26 27 28 24 27 16 32 9 27 9 22Z" fill="#5b63cf"/><path d="M1 9H17V25H1Z" fill="#4b53bc"/><path d="M5 13H13M9 13V21.500" stroke="#fff" stroke-width="2"/><circle cx="25" cy="26" r="8.500" fill="#c4142d"/><text x="25" y="31" font-size="15" font-weight="700" text-anchor="middle" fill="#fff">8</text></svg></button>
  <button class="plain app open" aria-label="Internet Explorer window"><svg width="30" height="32"><use href="#ie"/></svg></button>
  <button class="plain app open" aria-label="Skype"><svg width="28" height="30"><use href="#skype"/></svg></button>
  <button class="plain app open front" aria-label="Excel"><svg width="30" height="28" viewBox="0 0 30 28"><path d="M7 0H29V28H7Z" fill="#21a366"/><path d="M18 0H29V7H18Z" fill="#33c481"/><path d="M7 14H29V21H7Z" fill="#107c41"/><path d="M7 21H29V28H7Z" fill="#185c37"/><path d="M0 6H15V21H0Z" fill="#0d6635"/><path d="M4.500 9.500 10.500 17.500M10.500 9.500 4.500 17.500" stroke="#fff" stroke-width="2.200"/></svg></button>
  <div class="ms-auto d-flex">
    <button class="plain tray" aria-label="Show hidden icons"><svg width="17" height="9" viewBox="0 0 17 9"><path d="M.7 8.300 8.500.8 16.300 8.300" stroke="#fff" stroke-width="1.300"/></svg></button>
    <button class="plain tray" aria-label="Dropbox"><svg width="20" height="20" viewBox="0 0 20 20"><path d="M5 1 9.500 3.500 5 6 .5 3.500ZM14 1 18.500 3.500 14 6 9.500 3.500ZM5 7 9.500 9.500 5 12 .5 9.500ZM5 13 9.500 11 9.500 17Z" fill="#fff"/><circle cx="14" cy="13.500" r="6" fill="#d6102d"/><path d="M11.800 11.300 16.200 15.700M16.200 11.300 11.800 15.700" stroke="#fff" stroke-width="1.500"/></svg></button>
    <button class="plain tray" aria-label="Microphone"><svg width="14" height="20" viewBox="0 0 14 20"><path d="M3 0H11V13C11 15 3 15 3 13Z" fill="#fff"/><path d="M.7 11V14C.7 17.500 13.300 17.500 13.300 14V11M7 16V19.300M3 19.300H11" stroke="#fff" stroke-width="1.200"/></svg></button>
    <button class="plain tray" aria-label="Battery"><svg width="20" height="16" viewBox="0 0 20 16"><path d="M5 6V13.300H17.300V4.700H7M18 7.500H19.300V10.500H18" stroke="#fff" stroke-width="1.200"/><path d="M8 6.500H15.500V11.500H7Z" fill="#fff"/><path d="M1 3.500H6V6C6 8.500 1 8.500 1 6ZM2 3.500V1M5 3.500V1M3.500 8V11" stroke="#fff" stroke-width="1.100"/></svg></button>
    <button class="plain tray" aria-label="Volume"><svg width="21" height="18" viewBox="0 0 21 18"><path d="M1 6H4L8 2V16L4 12H1ZM11 7C12 8.500 12 9.500 11 11M13.500 4.500C16 7 16 11 13.500 13.500M16.500 1.500C20.500 6 20.500 12 16.500 16.500" stroke="#fff" stroke-width="1.200"/></svg></button>
    <div class="clock">9:31 AM<br>8/27/2020</div>
    <button class="plain bell" aria-label="15 new notifications"><svg width="31" height="34" viewBox="0 0 31 34"><path d="M0 2H20V17H12L8 21V17H0Z" fill="#fff"/><path d="M4 6.500H16M4 10H16M4 13.500H10" stroke="#1c2a44" stroke-width="1.200"/><circle cx="19.500" cy="21.500" r="10.500" fill="#2d3036" stroke="#888" stroke-width="1"/><text x="19.500" y="27" font-size="14" font-weight="600" text-anchor="middle" fill="#fff">15</text></svg></button>
    <div class="peek"></div>
  </div>
</footer>

<script>
  const widths = [80, 80, 114, 96, 127, 90, 80, 107, 80, 80, 80, 143, 120, 80, 80, 80, 80, 80, 80, 80];
  const letters = 'ABCDEFGHIJKLMNOPQRSTU';
  const lastRow = 28;
  const rowClass = { 2: 'tall', 6: 'ruled' };
  document.getElementById('cols').innerHTML =
    '<col style="width:34px">' + widths.map(w => `<col style="width:${w}px">`).join('') + '<col>';
  document.getElementById('letters').innerHTML =
    '<th><svg class="ms-auto me-1 mb-1" width="16" height="16"><path d="M16 0V16H0Z" fill="#b4b4b4"/></svg></th>' +
    [...letters].map(l => `<th${l === 'Q' ? ' class="here"' : ''}>${l === 'U' ? '' : l}</th>`).join('');

  // address: [text, classes, number of columns the text runs over]
  const data = {
    A2: ['Legend', 'title-cell', 2],
    A3: ['Labor DLY'], B3: ['Labor HRLY'], C3: ['Labor SAL'], D3: ['Green'],
    A4: ['Vacation'], D4: ['Orange'], A5: ['Holiday'], D5: ['Gray'],
    A6: ['Time not Entered', '', 2], D6: ['Pink'],
    F3: ['Employee # 450, 451, 452 are Labor DLY - gets a daily pay rate', 'b', 6],
    F4: ['Employee #453 is Salaried', 'b', 3],
    F5: ['Employee# 454 is an Hourly employee paid by the hour', 'b', 5],
    B8: ['WorkDate'], B9: ['Category'], A10: ['Empoyee#'], B10: ['Dept'],
    C9: ['Labor DLY'], D9: ['Labor HRLY'], E9: ['Labor SAL'], F9: ['Vacation'], G9: ['Holiday'],
    H9: ['Labor DLY'], I9: ['Labor HRLY'], J9: ['Labor SAL'], K9: ['Vacation'], L9: ['Holiday'],
    M10: ['Totals', 'b'], O10: ['Vacation', 'b red'], P10: ['Holiday', 'b red'],
    O11: [8, 'b red'], P11: [4, 'b red'], O12: [8, 'b red'], P13: [8, 'b red'], P15: [8, 'b red'],
    Q13: ['These totals are need in the Power BI Matrix', 'b', 5],
    C11: [8, 'olive'], F11: [8, 'orange'], G11: [4, 'gray'],
    H12: [8, 'green'], K12: [8, 'orange'], G13: [8, 'gray'], H13: [8, 'green'],
    E14: [8, 'green'], J14: [8, 'green'], D15: [8, 'green'], I15: [8, 'green'],
    A19: ['Employee #1 work hours are daily which is 8, however it logs Labor Hrly and Labor SAL as missing time which is not correct', '', 10],
    A20: ['Employee #2 &amp; #3 had missing time on 8/1/2020', '', 4],
    A21: ['Employee#5 is Labor HRLY but it enters on 8/1/2020 missing tme for Labor DLY and missing time on 8/3/2020 for Labor SAL which is not correct', '', 12],
    A23: ['The totals column should break out the time - I need to add two additional total columns to the matrix.', '', 8]
  };
  [...'CDEFGHIJKL'].forEach((c, i) => data[c + 8] = [`8/${i + 1}/2020`, 'r']);
  [20, 16, 16, 16, 16].forEach((t, i) => {
    data['A' + (11 + i)] = [i + 1];
    data['B' + (11 + i)] = [450 + i];
    data['M' + (11 + i)] = [t, 'b'];
  });

  let html = '';
  for (let r = 1; r <= lastRow + 1; r++) {
    html += `<tr${rowClass[r] ? ` class="${rowClass[r]}"` : ''}><th${r === 8 ? ' class="here"' : ''}>${r <= lastRow ? r : ''}</th>`;
    for (let c = 0; c < letters.length; c++) {
      const cell = data[letters[c] + r] || [''];
      const cls = [cell[1] || ''];
      if (typeof cell[0] === 'number') cls.push('r');
      if (!cell[1] && r >= 11 && r <= 15 && c >= 2 && c <= 11) cls.push('pink');
      if (c < 4 && (r === 2 || r === 6)) cls.push('ul');
      if (c === 3 && r >= 3 && r <= 6) cls.push('ur');
      const span = cell[2] || 1;
      html += `<td class="${cls.join(' ').trim()}"${span > 1 ? ` colspan="${span}"` : ''}>${cell[0]}</td>`;
      c += span - 1;
    }
    html += '</tr>';
  }
  document.getElementById('rows').innerHTML = html;
</script>
</body>
</html>
